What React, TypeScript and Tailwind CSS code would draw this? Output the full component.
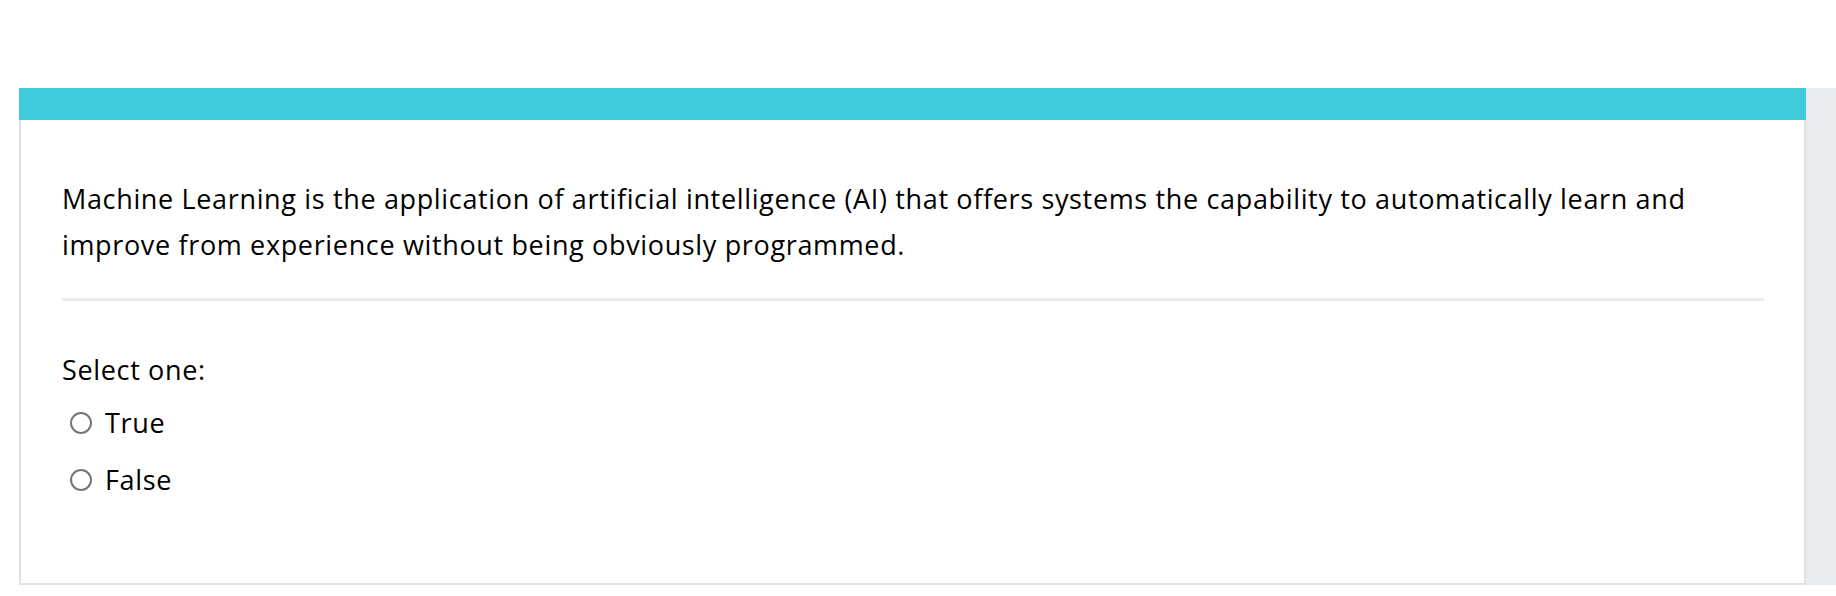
export default function App() {
  const options = ['True', 'False'];

  return (
    <div className="min-h-[596px] bg-white pt-[88px] pl-[19px]" style={{ fontFamily: '"Open Sans", "Noto Sans", sans-serif' }}>
      <div className="flex">
        {/* question card */}
        <div className="w-[1787px] border-x-2 border-b-2 border-[#dee2e6] bg-white">
          <div className="h-[32px] -mx-[2px] bg-[#40cbdb]" />

          <div className="pl-[41px] pr-[40px] pt-[56px] pb-[80px] text-[27px] leading-[46px] tracking-[0.65px] text-black">
            <p>
              Machine Learning is the application of artificial intelligence (AI) that offers systems the capability to
              automatically learn and improve from experience without being obviously programmed.
            </p>

            <div className="mt-[30px] h-[3px] bg-[#e9ecef]" />

            <div className="mt-[46px]">Select one:</div>

            <div className="mt-[7px] flex flex-col gap-[11px]">
              {options.map((opt) => (
                <label key={opt} className="flex items-center pl-[8px]">
                  <span className="block h-[22px] w-[22px] shrink-0 rounded-full border-[2px] border-[#767676] bg-white" />
                  <span className="ml-[13px]">{opt}</span>
                </label>
              ))}
            </div>
          </div>
        </div>

        {/* side panel */}
        <div className="w-[30px] bg-[#e9ecef]" />
      </div>
    </div>
  );
}
